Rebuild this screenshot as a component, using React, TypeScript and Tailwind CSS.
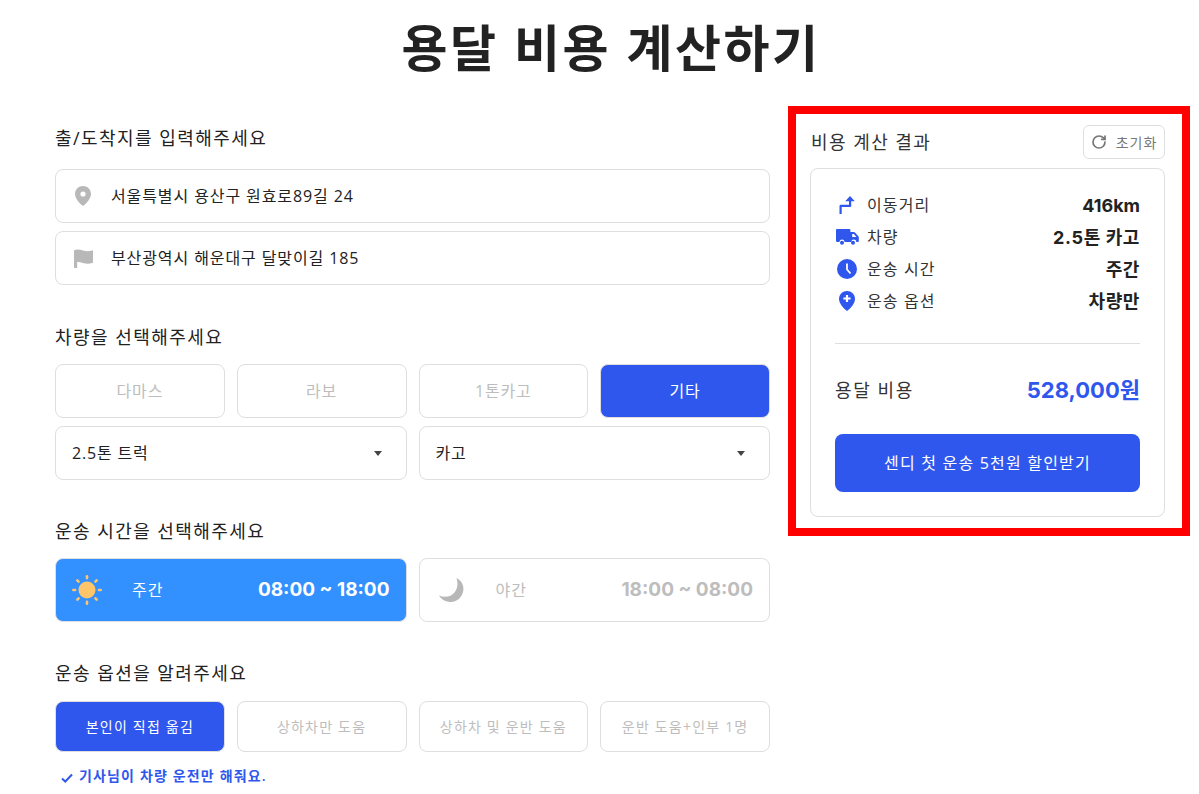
import React from "react";
import { RotateCw } from "lucide-react";

const font = "font-['Open_Sans','Noto_Sans_CJK_KR',sans-serif]";
const boldFont = "font-['Inter','Noto_Sans_CJK_KR',sans-serif]";

const PinIcon = ({ className }: { className: string }) => (
  <svg viewBox="0 0 16 20" className={className} fill="currentColor">
    <path fillRule="evenodd" d="M8 0C3.600 0 0 3.500 0 7.900 0 12.800 5 17.600 8 20c3-2.400 8-7.200 8-12.100C16 3.500 12.400 0 8 0Zm0 5.400a2.600 2.600 0 1 1 0 5.200 2.600 2.600 0 0 1 0-5.200Z" />
  </svg>
);

const FlagIcon = () => (
  <svg viewBox="0 0 18 18" className="w-[19px] h-[19px] text-[#b8b8b8]" fill="currentColor">
    <path d="M0 1.200c3-1.200 5.600-.8 8.500.2 3 1 6 1.100 9.500-.2v11.800c-3.500 1.300-6.500 1.200-9.500.2-2.300-.8-4-1-5.500-.8V18H0V1.200Z" />
  </svg>
);

const Heading = ({ children }: { children: React.ReactNode }) => (
  <h2 className="text-[18px] leading-[26px] font-normal tracking-[1.450px] text-[#222]">{children}</h2>
);

const AddressRow = ({ icon, text }: { icon: React.ReactNode; text: string }) => (
  <div className="flex items-center h-[54px] border border-[#dedede] rounded-lg">
    <div className="w-[55px] flex justify-center pr-[1px]">{icon}</div>
    <span className="text-[16px] tracking-[0.9px] text-[#222]">{text}</span>
  </div>
);

const Choice = ({ label }: { label: string }) => (
  <div className="flex items-center justify-center h-[54px] border border-[#dedede] rounded-lg text-[16px] tracking-[0.8px] text-[#bdbdbd]">
    {label}
  </div>
);

const Select = ({ label }: { label: string }) => (
  <div className="flex items-center justify-between h-[54px] border border-[#dedede] rounded-lg pl-4 pr-6 text-[16px] tracking-[0.8px] text-[#222]">
    <span>{label}</span>
    <svg viewBox="0 0 8 5" className="w-2 h-[5px] text-[#444]" fill="currentColor">
      <path d="M0 0h8L4 5Z" />
    </svg>
  </div>
);

const Option = ({ label }: { label: string }) => (
  <div className="flex items-center justify-center h-[51px] border border-[#dedede] rounded-lg text-[14px] tracking-[1.2px] text-[#bdbdbd]">
    {label}
  </div>
);

const Sun = () => {
  const rays = [0, 45, 90, 135, 180, 225, 270, 315];
  return (
    <svg viewBox="0 0 30 30" className="w-[30px] h-[30px]">
      <circle cx="15" cy="15" r="8.500" fill="#ffc56b" />
      {rays.map((r) => (
        <rect key={r} x="13.700" y="0" width="2.600" height="4.400" rx="1.300" fill="#ffc56b" transform={`rotate(${r} 15 15)`} />
      ))}
    </svg>
  );
};

const Moon = () => (
  <svg viewBox="0 0 26 26" className="w-[26px] h-[26px] text-[#b8b8b8]" fill="currentColor">
    <path d="M18.500 1C24 4 26.500 9 25 15c-1.500 6-7 10.500-13 10C7 24.700 3 22 1 18.500c5.500 2.500 11 1.500 15-2.500 3.600-4 4.300-9.500 2.500-15Z" />
  </svg>
);

const Route = () => (
  <svg viewBox="0 0 16 18" className="w-[16px] h-[18px] text-[#2f57ed]" fill="currentColor">
    <path d="M11 0l4.800 5.300h-3.600V10a1 1 0 0 1-1 1H2.700v7H.5v-8a1.200 1.200 0 0 1 1.200-1.200H10V5.300H6.200Z" />
  </svg>
);

const Truck = () => (
  <svg viewBox="0 0 23 16" className="w-[23px] h-[16px] text-[#2f57ed]" fill="currentColor">
    <path fillRule="evenodd" d="M1.200 0h12c.7 0 1.200.5 1.200 1.200V3h3.400c.5 0 .9.200 1.200.5l3.300 3.700c.3.300.5.700.5 1.100V12c0 .6-.4 1-1 1h-1.500a2.500 2.500 0 0 0-5 0H8.500a2.500 2.500 0 0 0-5 0H1.200C.5 13 0 12.500 0 11.800V1.200C0 .5.500 0 1.200 0Zm15 5v3h4.200l-2.600-3h-1.600Z" />
    <circle cx="6" cy="13.700" r="2" />
    <circle cx="17" cy="13.700" r="2" />
  </svg>
);

const Clock = () => (
  <svg viewBox="0 0 20 20" className="w-5 h-5 text-[#2f57ed]">
    <circle cx="10" cy="10" r="10" fill="currentColor" />
    <path d="M10 4.500v6l3.500 4" stroke="#fff" strokeWidth="1.800" fill="none" />
  </svg>
);

const PinPlus = () => (
  <svg viewBox="0 0 16 20" className="w-[16px] h-[20px] text-[#2f57ed]">
    <path d="M8 0C3.600 0 0 3.500 0 7.900 0 12.800 5 17.600 8 20c3-2.400 8-7.200 8-12.100C16 3.500 12.400 0 8 0Z" fill="currentColor" />
    <path d="M8 3.900v7.200M4.400 7.500h7.200" stroke="#fff" strokeWidth="2.200" />
  </svg>
);

const ResultRow = ({ icon, label, value, big }: { icon: React.ReactNode; label: string; value: string; big?: boolean }) => (
  <div className="flex items-center justify-between h-8">
    <div className="flex items-center">
      <div className="w-6 flex justify-center">{icon}</div>
      <span className="ml-2 text-[16px] tracking-[1.1px] text-[#333]">{label}</span>
    </div>
    <span className={`${boldFont} font-bold text-[#222] ${big ? "text-[18px] tracking-[0.6px]" : "text-[18px]"}`}>{value}</span>
  </div>
);

export default function App() {
  return (
    <div className={`${font} h-[794px] overflow-hidden bg-white`}>
      <h1 className="text-center text-[50px] leading-[60px] font-bold text-[#222] pt-[18px] pl-[23px] tracking-[2.5px]">
        용달 비용 계산하기
      </h1>
      <div className="flex pl-[55px] pt-[28px] gap-[18px]">
        <div className="w-[715px]">
          <div className="pt-[19px]">
            <Heading>출/도착지를 입력해주세요</Heading>
          </div>
          <div className="mt-[18px] flex flex-col gap-2">
            <AddressRow icon={<PinIcon className="w-4 h-5 text-[#b8b8b8]" />} text="서울특별시 용산구 원효로89길 24" />
            <AddressRow icon={<FlagIcon />} text="부산광역시 해운대구 달맞이길 185" />
          </div>

          <div className="mt-[39px]">
            <Heading>차량을 선택해주세요</Heading>
          </div>
          <div className="mt-[14px] grid grid-cols-4 gap-3">
            <Choice label="다마스" />
            <Choice label="라보" />
            <Choice label="1톤카고" />
            <div className="flex items-center justify-center h-[54px] rounded-lg bg-[#2f57ed] border border-[#dedede] text-[16px] tracking-[0.8px] text-white">기타</div>
          </div>
          <div className="mt-2 grid grid-cols-2 gap-3">
            <Select label="2.5톤 트럭" />
            <Select label="카고" />
          </div>

          <div className="mt-[38px]">
            <Heading>운송 시간을 선택해주세요</Heading>
          </div>
          <div className="mt-[14px] grid grid-cols-2 gap-3">
            <div className="flex items-center h-16 rounded-lg bg-[#3390ff] border border-[#dedede] pl-[16px] pr-4 text-white">
              <Sun />
              <span className="ml-[30px] text-[16px] tracking-[1px]">주간</span>
              <span className={`${boldFont} ml-auto text-[19px] font-bold`}>08:00 ~ 18:00</span>
            </div>
            <div className="flex items-center h-16 rounded-lg border border-[#dedede] pl-[18px] pr-4 text-[#bdbdbd]">
              <Moon />
              <span className="ml-[32px] text-[16px] tracking-[1px]">야간</span>
              <span className={`${boldFont} ml-auto text-[19px] font-bold`}>18:00 ~ 08:00</span>
            </div>
          </div>

          <div className="mt-[38px]">
            <Heading>운송 옵션을 알려주세요</Heading>
          </div>
          <div className="mt-[15px] grid grid-cols-4 gap-3">
            <div className="flex items-center justify-center h-[51px] rounded-lg bg-[#2f57ed] border border-[#dedede] text-[14px] tracking-[1.2px] text-white">본인이 직접 옮김</div>
            <Option label="상하차만 도움" />
            <Option label="상하차 및 운반 도움" />
            <Option label="운반 도움+인부 1명" />
          </div>
          <div className="mt-[13px] pl-[6px] flex items-center text-[14px] tracking-[1.150px] font-semibold text-[#2f57ed]">
            <svg viewBox="0 0 12 10" className="w-3 h-[10px] mt-1" fill="none" stroke="currentColor" strokeWidth="2">
              <path d="M1 5.500 4.300 8.500 11 1.500" />
            </svg>
            <span className="ml-[6px]">기사님이 차량 운전만 해줘요.</span>
          </div>
        </div>

        <div className="w-[402px] h-[430px] border-8 border-[#ff0000] pt-[11px] pl-[14px] pr-[17px]">
          <div className="flex items-center justify-between h-[34px]">
            <span className="text-[18px] tracking-[1.450px] text-[#333] ml-px">비용 계산 결과</span>
            <div className="flex items-center justify-center w-[82px] h-[34px] border border-[#dedede] rounded-md gap-[9px] text-[14px] tracking-[0.9px] text-[#777]">
              <RotateCw className="w-[16px] h-[16px] text-[#777]" strokeWidth={2.600} />
              초기화
            </div>
          </div>
          <div className="mt-[9px] h-[349px] border border-[#dedede] rounded-lg px-6 pt-[20px]">
            <ResultRow icon={<Route />} label="이동거리" value="416km" />
            <ResultRow icon={<Truck />} label="차량" value="2.5톤 카고" big />
            <ResultRow icon={<Clock />} label="운송 시간" value="주간" big />
            <ResultRow icon={<PinPlus />} label="운송 옵션" value="차량만" big />
            <div className="mt-[26px] border-t border-[#dedede]" />
            <div className="mt-[26px] flex items-center justify-between h-[40px]">
              <span className="text-[18px] tracking-[1.6px] text-[#333]">용달 비용</span>
              <span className={`${boldFont} text-[22px] font-bold text-[#2f57ed]`}>528,000원</span>
            </div>
            <div className="mt-[24px] flex items-center justify-center h-[58px] rounded-lg bg-[#2f57ed] text-[16px] tracking-[1.2px] text-white">
              센디 첫 운송 5천원 할인받기
            </div>
          </div>
        </div>
      </div>
    </div>
  );
}
